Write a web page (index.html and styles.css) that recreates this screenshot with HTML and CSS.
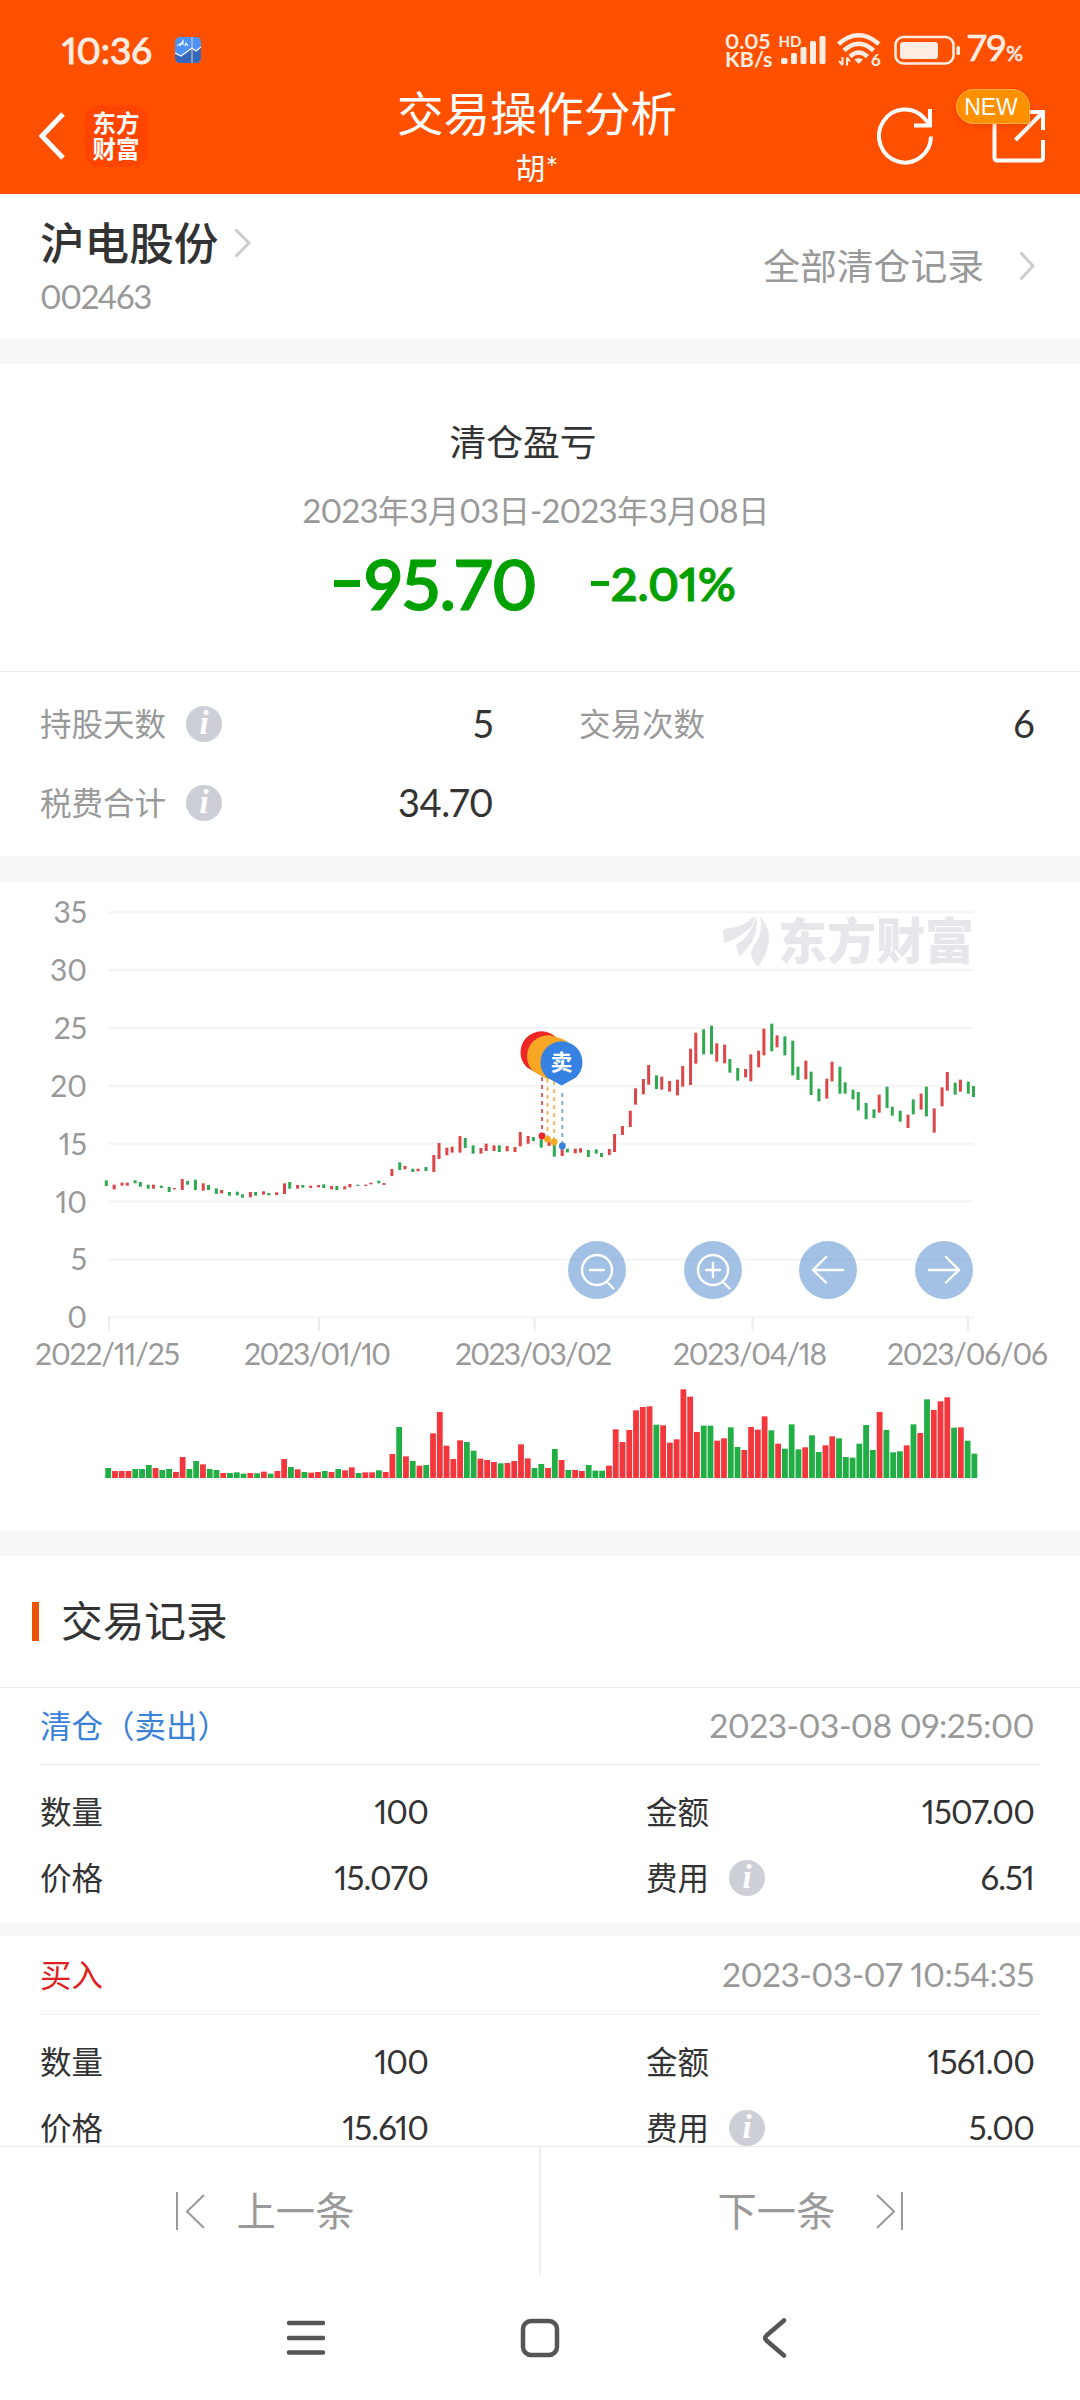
FILE: index.html
```html
<!DOCTYPE html>
<html lang="zh-CN">
<head>
    <meta charset="UTF-8">
    <meta name="viewport" content="width=device-width, initial-scale=1.0">
    <title>交易操作分析</title>
    <link rel="stylesheet" href="styles.css">
</head>
<body>
    <header class="header">
        <div class="status-bar">
            <span class="time">10:36</span>
            <svg class="app-icon" width="26" height="26" viewBox="0 0 26 26">
                <rect width="26" height="26" rx="5" fill="#4a92f8"/>
                <path d="M0 16 L6 19 L17 11 L21 14 L26 10 V21 a5 5 0 0 1 -5 5 H5 a5 5 0 0 1 -5 -5z" fill="#3568bd"/>
                <path d="M0 16 L6 19 L17 11 L21 14 L26 10" fill="none" stroke="#fff" stroke-width="1.3"/>
                <path d="M2 8h3v-2M5 9l3-5v4M10 9l1-3 2 3" fill="none" stroke="#fff" stroke-width="1.1"/>
                <path d="M17 0V26" stroke="#e5d3a0" stroke-width="1"/>
            </svg>
            <div class="net-speed"><span>0.05</span><span>KB/s</span></div>
            <svg class="signal" width="48" height="34" viewBox="778 33 48 34">
                <text x="778.5" y="46.5" class="hd">HD</text>
                <g fill="#ffece2">
                    <rect x="781" y="58" width="6.5" height="6" rx="1.5"/>
                    <rect x="791" y="53" width="6" height="11" rx="1.5"/>
                    <rect x="800.500" y="47" width="6" height="17" rx="1.5"/>
                    <rect x="810" y="41" width="6" height="23" rx="1.5"/>
                    <rect x="819.500" y="36" width="6" height="28" rx="1.5"/>
                </g>
            </svg>
            <svg class="wifi" width="44" height="36" viewBox="837 33 44 36">
                <g fill="none" stroke="#ffece2" stroke-width="4.500">
                    <path d="M838.500 45 Q858.500 27.500 879 45"/>
                    <path d="M844 51.500 Q858.500 38 873.500 51.500"/>
                    <path d="M850 57.500 Q858.500 49.500 867.500 57.500"/>
                </g>
                <path d="M854.500 60.500 Q858.500 57.500 863 60.500 L858.700 65z" fill="#ffece2"/>
                <path d="M842.500 58V66M839 62l3.500 4M847 66.500V58.500M847 58.500l3 4" stroke="#ffece2" stroke-width="2" fill="none"/>
                <text x="871" y="66.500" class="wifi-gen">6</text>
            </svg>
            <svg class="battery" width="67" height="30" viewBox="894 34 67 30">
                <rect x="895.500" y="36" width="58" height="26.500" rx="8" fill="none" stroke="#ffece2" stroke-width="2.600"/>
                <rect x="900" y="41" width="38" height="17" rx="3" fill="#ffece2"/>
                <rect x="956.500" y="45" width="3.500" height="9" rx="1.500" fill="#ffece2"/>
            </svg>
            <span class="percent">79<small>%</small></span>
        </div>
        <div class="title-bar">
            <div class="title-left">
                <svg width="28" height="48" viewBox="0 0 28 48"><path d="M25 2 L4 24 L25 46" fill="none" stroke="#fff" stroke-width="5"/></svg>
                <div class="brand"><span>东方</span><span>财富</span></div>
            </div>
            <div class="title-center">
                <h1>交易操作分析</h1>
                <p>胡*</p>
            </div>
            <div class="title-right">
                <svg width="56" height="58" viewBox="877 107 56 58">
                    <path d="M931 136.500 A26 26.500 0 1 1 924.500 118.500 L930 125" fill="none" stroke="#fff" stroke-width="4"/>
                    <path d="M914 125.500H930V109" fill="none" stroke="#fff" stroke-width="4"/>
                </svg>
                <div class="share">
                    <svg width="54" height="54" viewBox="992 109 54 54">
                        <path d="M994.500 118V158a2.500 2.500 0 0 0 2.500 2.500H1040.500a2.500 2.500 0 0 0 2.500-2.500V140" fill="none" stroke="#fff" stroke-width="4"/>
                        <path d="M1026 112H1043V130M1043 112L1015.500 140" fill="none" stroke="#fff" stroke-width="4"/>
                    </svg>
                    <span class="new-badge">NEW</span>
                </div>
            </div>
        </div>
    </header>

    <section class="stock">
        <div class="stock-info">
            <div class="stock-name">
                <h2>沪电股份</h2>
                <svg width="17" height="30" viewBox="0 0 17 30"><path d="M1.500 1.500 L15 15 L1.500 28.500" fill="none" stroke="#ccc" stroke-width="3"/></svg>
            </div>
            <div class="stock-code">002463</div>
        </div>
        <a class="all-records">
            <span>全部清仓记录</span>
            <svg width="16" height="30" viewBox="0 0 16 30"><path d="M1.500 1.500 L14 15 L1.500 28.500" fill="none" stroke="#ccc" stroke-width="3"/></svg>
        </a>
    </section>

    <section class="summary">
        <h3>清仓盈亏</h3>
        <p class="period"><i>2023</i>年<i>3</i>月<i>03</i>日<i>-2023</i>年<i>3</i>月<i>08</i>日</p>
        <div class="profit">
            <b class="profit-value"><u></u>95.70</b>
            <b class="profit-rate"><u></u>2.01%</b>
        </div>
    </section>

    <section class="stats">
        <div class="stat"><span>持股天数</span><em class="info">i</em><b>5</b></div>
        <div class="stat"><span>交易次数</span><b>6</b></div>
        <div class="stat"><span>税费合计</span><em class="info">i</em><b>34.70</b></div>
    </section>

    <section class="chart">
        <svg id="chart" width="1080" height="648" viewBox="0 882 1080 648">
            <g id="grid"></g>
            <g id="watermark" fill="#e6e6eb">
                <path d="M723 931 Q724 928 731 928 Q746 926 754 916 Q755 920 751 927 Q741 937 724 943z"/>
                <path d="M756 916 Q759 927 752 942 L740 957 Q737 950 736 945 Q751 936 756 916z"/>
                <path d="M760 917 Q769 925 769 939 Q768 953 758 967 Q751 959 751 953 Q751 949 757 941 Q763 930 760 917z"/>
                <text x="778" y="959" class="watermark-text">东方财富</text>
            </g>
            <g id="candles"></g>
            <g id="markers">
                <g fill="none" stroke-width="1.700" stroke-dasharray="4 4">
                    <path d="M542 1077V1134" stroke="#cf4a48"/>
                    <path d="M547.500 1079V1137" stroke="#f0b34c"/>
                    <path d="M554.200 1081V1140" stroke="#f0b34c"/>
                    <path d="M562.300 1093V1144" stroke="#6aa1da"/>
                </g>
                <circle cx="542" cy="1136" r="3.400" fill="#ea2428"/>
                <circle cx="547.500" cy="1139.300" r="3.400" fill="#f6a723"/>
                <circle cx="554.200" cy="1142" r="3.400" fill="#f6a723"/>
                <circle cx="562.300" cy="1146" r="3.400" fill="#3682e2"/>
                <path d="M541.500 1075.500 L527 1067.500 A21 21 0 1 1 556 1067.500z" fill="#ee2624"/>
                <path d="M548 1079.500 L533.500 1071.500 A21 21 0 1 1 562.500 1071.500z" fill="#f8a725"/>
                <path d="M554.500 1081.500 L540 1073.500 A21 21 0 1 1 569 1073.500z" fill="#f8a725"/>
                <path d="M561.500 1085.500 L547 1077.500 A21 21 0 1 1 576 1077.500z" fill="#3682e2"/>
                <text x="561.500" y="1070" class="pin-text">卖</text>
            </g>
            <g id="volumes"></g>
            <g id="controls" fill="none" stroke="#fff" stroke-width="2.400" stroke-linecap="round">
                <circle cx="597" cy="1270" r="29" class="control"/>
                <circle cx="597" cy="1270" r="15"/><path d="M590 1270H604M608 1283L613.500 1288.500"/>
                <circle cx="713" cy="1270" r="29" class="control"/>
                <circle cx="713" cy="1270" r="15"/><path d="M706 1270H720M713 1263V1277M724 1283L729.500 1288.500"/>
                <circle cx="828" cy="1270" r="29" class="control"/>
                <path d="M843 1270H813M826 1257L813 1270L826 1282.500"/>
                <circle cx="944" cy="1270" r="29" class="control"/>
                <path d="M929 1270H959M946 1257L959 1270L946 1282.500"/>
            </g>
        </svg>
    </section>

    <section class="records">
        <h3 class="records-title">交易记录</h3>
        <div class="record first">
            <div class="record-head"><span class="sell">清仓（卖出）</span><time>2023-03-08 09:25:00</time></div>
            <div class="record-body">
                <div class="cell"><span>数量</span><b>100</b></div>
                <div class="cell"><span>金额</span><b>1507.00</b></div>
                <div class="cell"><span>价格</span><b>15.070</b></div>
                <div class="cell"><span>费用</span><em class="info">i</em><b>6.51</b></div>
            </div>
        </div>
        <div class="record">
            <div class="record-head"><span class="buy">买入</span><time>2023-03-07 10:54:35</time></div>
            <div class="record-body">
                <div class="cell"><span>数量</span><b>100</b></div>
                <div class="cell"><span>金额</span><b>1561.00</b></div>
                <div class="cell"><span>价格</span><b>15.610</b></div>
                <div class="cell"><span>费用</span><em class="info">i</em><b>5.00</b></div>
            </div>
        </div>
    </section>

    <footer class="footer">
        <div class="pager">
            <a>
                <svg width="30" height="38" viewBox="0 0 30 38"><path d="M1 0V38M28 3L11 19.500L28 36" fill="none" stroke="#999" stroke-width="2"/></svg>
                <span>上一条</span>
            </a>
            <a>
                <span>下一条</span>
                <svg width="27" height="38" viewBox="0 0 27 38"><path d="M26 0V38M1 3L18 19.500L1 36" fill="none" stroke="#999" stroke-width="2"/></svg>
            </a>
        </div>
        <nav class="system-nav">
            <svg width="38" height="40" viewBox="0 0 38 40"><path d="M2 5H36M2 20H36M2 34.500H36" stroke="#555" stroke-width="4.500" stroke-linecap="round"/></svg>
            <svg width="40" height="40" viewBox="0 0 40 40"><rect x="3" y="3" width="34" height="34" rx="8" fill="none" stroke="#555" stroke-width="4.500"/></svg>
            <svg width="28" height="40" viewBox="0 0 28 40"><path d="M24 2.500 L6.500 17.500 Q4 20 6.500 22.500 L24 37.500" fill="none" stroke="#555" stroke-width="4.500" stroke-linecap="round"/></svg>
        </nav>
    </footer>

    <script>
        // colour, candle top, candle bottom, volume (thirds of a pixel, measured from y = 1000)
        const days = `
            g 541 558 30,r 554 568 21,r 548 557 21,r 548 557 21,g 541 550 27,g 546 560 27,g 554 566 39,r 554 566 30,
            g 557 564 24,g 561 576 27,r 564 568 18,r 537 570 63,g 543 554 27,g 539 570 51,r 550 572 41,g 555 570 27,
            g 565 582 24,r 570 580 15,g 576 587 15,g 575 586 17,g 583 593 13,r 576 592 15,g 576 587 14,r 574 584 19,
            g 579 586 13,r 577 585 21,r 550 582 57,g 546 566 33,r 555 566 26,g 555 563 18,r 557 564 16,r 555 562 18,
            g 553 564 21,r 558 568 18,g 558 570 27,r 559 568 23,r 552 562 32,g 554 558 15,r 554 558 17,r 548 553 17,
            g 542 550 23,r 549 555 18,r 507 528 72,g 487 510 153,r 498 508 65,g 506 516 51,r 506 514 37,g 501 513 39,
            r 465 516 134,r 429 477 198,r 443 466 97,r 440 458 57,r 408 458 113,g 414 444 108,g 436 461 82,r 444 461 58,
            r 431 453 54,r 436 453 48,g 436 456 44,r 438 454 45,r 441 456 51,r 396 439 101,r 408 431 59,g 411 423 30,
            g 418 443 42,r 425 438 30,g 432 470 87,r 445 468 54,g 446 457 24,r 446 460 24,r 445 458 21,g 450 471 39,
            g 448 461 22,g 459 471 22,r 447 465 37,r 402 456 146,r 378 405 108,r 332 381 144,r 265 314 203,r 237 283 213,
            r 195 254 215,g 226 267 160,r 230 269 158,r 243 275 106,r 239 286 116,r 198 260 266,r 146 255 244,r 98 191 138,
            g 88 163 157,g 77 163 157,r 130 185 112,r 134 190 119,g 177 218 152,g 204 242 93,r 207 232 84,r 163 244 153,
            r 152 202 145,r 86 166 185,g 71 154 143,r 106 142 103,g 109 166 88,g 122 226 161,g 200 240 86,r 182 238 92,
            g 215 285 128,g 266 304 78,r 236 296 98,r 185 244 125,g 200 281 119,g 247 281 63,g 269 298 61,g 276 331 103,
            g 309 358 159,g 328 354 84,r 284 338 198,g 260 324 144,g 320 347 77,g 332 365 80,r 344 384 98,g 298 343 161,
            r 281 329 135,g 260 349 236,r 325 398 204,r 262 319 230,r 216 272 242,g 248 284 151,r 239 275 152,g 245 281 112,
            g 258 291 73`.split(',').map(d => d.trim().split(' '));

        const candleColors = { r: '#dc4649', g: '#2fa850' };
        const volumeColors = { r: '#f4373c', g: '#20ae45' };

        let grid = '';
        for (let i = 0; i < 8; i++) {
            const y = 912.300 + i * 57.850;
            grid += `<path d="M108 ${y}H974" stroke="#f4f4f4" stroke-width="2"/>`;
            grid += `<text x="87" y="${y + 11}" class="axis" text-anchor="end">${35 - i * 5}</text>`;
        }
        const dates = [
            ['2022/11/25', 109, 35, 145],
            ['2023/01/10', 319, 244, 147],
            ['2023/03/02', 534.500, 455, 157],
            ['2023/04/18', 752.500, 673, 154],
            ['2023/06/06', 968, 887, 161]
        ];
        dates.forEach(([label, tick, x, width]) => {
            grid += `<path d="M${tick} 1317V1331" stroke="#ebebeb" stroke-width="2"/>`;
            grid += `<text x="${x}" y="1365" class="axis" textLength="${width}">${label}</text>`;
        });
        document.getElementById('grid').innerHTML = grid;

        let candles = '';
        let volumes = '';
        days.forEach(([c, top, bottom, volume], i) => {
            // candles snap to whole dp columns, one dp is 2.62px
            const x = 106.300 + 2.620 * Math.ceil(i * 6.777 / 2.620 - 0.120);
            candles += `<rect x="${x - 1.500}" y="${1000 + top / 3}" width="3" height="${(bottom - top) / 3}" fill="${candleColors[c]}"/>`;
            volumes += `<rect x="${105.300 + i * 6.767}" y="${1478 - volume / 3}" width="5.800" height="${volume / 3}" fill="${volumeColors[c]}"/>`;
        });
        document.getElementById('candles').innerHTML = candles;
        document.getElementById('volumes').innerHTML = volumes;
    </script>
</body>
</html>
```

FILE: styles.css
```css
* {
    box-sizing: border-box;
}

body {
    margin: 0;
    width: 1080px;
    height: 2400px;
    overflow: hidden;
    display: flex;
    flex-direction: column;
    background-color: #f7f7f7;
    color: #333;
    font-family: Lato, "Noto Sans CJK SC", sans-serif;
    font-size: 31.5px;
    font-variant-numeric: proportional-nums;
}

h1, h2, h3, p {
    margin: 0;
    font-weight: normal;
}

b, i {
    font-weight: normal;
    font-style: normal;
}

svg {
    display: block;
    flex-shrink: 0;
}

section {
    background-color: #fff;
    flex-shrink: 0;
}

/* Header */
.header {
    height: 194px;
    flex-shrink: 0;
    background-color: #ff5000;
    color: #fff;
}

.status-bar {
    height: 84px;
    padding: 15px 54px 0 62px;
    display: flex;
    align-items: center;
    color: #ffece2;
}

.time {
    font-size: 37px;
    line-height: 40px;
    width: 113px;
    letter-spacing: -0.1px;
    -webkit-text-stroke: 1px #ffece2;
}

.net-speed {
    margin-left: auto;
    width: 53px;
    display: flex;
    flex-direction: column;
    font-size: 21.5px;
    font-weight: bold;
    line-height: 18px;
}

.hd {
    font-size: 15px;
    font-weight: bold;
    fill: #ffece2;
}

.wifi {
    margin-left: 11px;
}

.wifi-gen {
    font-size: 17px;
    font-weight: bold;
    fill: #ffece2;
}

.battery {
    margin-left: 13px;
}

.percent {
    margin-left: 6px;
    width: 59px;
    font-size: 37px;
    line-height: 40px;
    letter-spacing: -0.3px;
    white-space: nowrap;
    -webkit-text-stroke: 0.6px #ffece2;
}

.percent small {
    font-size: 21px;
}

.title-bar {
    height: 110px;
    padding: 0 34px 0 38px;
    display: flex;
    justify-content: space-between;
}

.title-left, .title-right {
    display: flex;
    align-items: center;
    width: 160px;
    height: 104px;
}

.title-right {
    width: 170px;
    justify-content: flex-end;
    gap: 59px;
}

.brand {
    margin-left: 19px;
    width: 62px;
    height: 62px;
    border-radius: 13px;
    background-color: #ff4500;
    display: flex;
    flex-direction: column;
    align-items: center;
    justify-content: center;
    font-family: "Noto Sans CJK SC", sans-serif;
    font-size: 23.5px;
    font-weight: bold;
    line-height: 26px;
    padding-bottom: 2px;
}

.title-center {
    text-align: center;
}

.title-center h1 {
    font-size: 46.7px;
    line-height: 58px;
}

.title-center p {
    font-size: 30px;
    line-height: 50px;
}

.share {
    position: relative;
}

.new-badge {
    position: absolute;
    left: -36px;
    top: -20px;
    width: 74px;
    height: 35px;
    border: 1px solid #ffb04a;
    border-radius: 18px 18px 0 18px;
    background-color: #ff9000;
    font-family: "Liberation Sans", sans-serif;
    font-size: 23px;
    line-height: 34px;
    text-align: center;
    padding-right: 4px;
    box-shadow: 0 2px 6px rgba(200, 40, 0, 0.35);
}

/* Stock */
.stock {
    height: 144px;
    padding: 0 45px 0 40px;
    display: flex;
    justify-content: space-between;
    align-items: center;
}

.stock-name {
    display: flex;
    align-items: center;
    gap: 16px;
}

.stock-name h2 {
    font-size: 44.6px;
    font-weight: 500;
    line-height: 60px;
}

.stock-code {
    color: #999;
    font-size: 33px;
    letter-spacing: -1.4px;
    line-height: 46px;
}

.all-records {
    display: flex;
    align-items: center;
    gap: 35px;
    font-size: 36.8px;
    color: #999;
}

.all-records span {
    padding-bottom: 4px;
}

/* Summary */
.summary {
    margin-top: 26px;
    height: 307px;
    padding-top: 52px;
    text-align: center;
}

.summary h3 {
    font-size: 36.8px;
    line-height: 52px;
    padding-right: 34px;
}

.period {
    margin-top: 20px;
    padding-right: 8px;
    font-size: 31.5px;
    line-height: 44px;
    color: #999;
}

.period i {
    font-size: 33px;
    letter-spacing: -0.7px;
}

.profit {
    display: flex;
    justify-content: center;
    align-items: center;
    gap: 54px;
    height: 84px;
    margin-top: 8px;
    padding-right: 10px;
    color: #00a000;
}

.profit b {
    display: flex;
    align-items: center;
    font-weight: 600;
    -webkit-text-stroke: 1px #00a000;
}

/* minus sign, a flat bar ahead of the digits */
.profit u {
    height: 7px;
    width: 26px;
    margin-right: 4px;
    background-color: #00a000;
}

.profit-value {
    font-size: 70px;
    letter-spacing: -0.8px;
}

.profit-rate {
    font-size: 47px;
    letter-spacing: -0.2px;
}

.profit .profit-rate u {
    height: 5px;
    width: 18px;
    margin-right: 2px;
}

/* Stats */
.stats {
    height: 185px;
    padding: 11px 46px 0 40px;
    border-top: 1px solid #ededed;
    display: grid;
    grid-template-columns: 453px 455px;
    grid-auto-rows: 79px;
    justify-content: space-between;
}

.stat {
    display: flex;
    align-items: center;
    color: #999;
}

.stat span, .cell span {
    padding-bottom: 2px;
}

.stat b {
    margin-left: auto;
    color: #333;
    font-size: 38px;
    letter-spacing: -0.7px;
}

.info {
    width: 36px;
    height: 36px;
    margin: 2px 0 0 20px;
    border-radius: 50%;
    background-color: #ccd0d6;
    color: #fff;
    font-family: "Liberation Serif", serif;
    font-size: 33px;
    font-style: italic;
    font-weight: bold;
    line-height: 34px;
    text-align: center;
}

/* Chart */
.chart {
    margin-top: 26px;
    height: 648px;
}

.axis {
    font-size: 30px;
    fill: #999;
}

.watermark-text {
    font-family: "Noto Sans CJK SC", sans-serif;
    font-size: 49px;
    font-weight: 900;
}

.pin-text {
    font-family: "Noto Sans CJK SC", sans-serif;
    font-size: 22px;
    font-weight: bold;
    fill: #fff;
    text-anchor: middle;
}

.control {
    fill: rgba(52, 118, 196, 0.45);
    stroke: none;
}

/* Records */
.records {
    margin-top: 26px;
}

.records-title {
    height: 131px;
    padding: 0 0 5px 32px;
    display: flex;
    align-items: center;
    font-size: 41.7px;
}

.records-title::before {
    content: "";
    width: 7px;
    height: 39px;
    margin: 4px 22px 0 0;
    background-color: #ea5504;
}

.record {
    height: 250px;
    border-bottom: 13px solid #f7f7f7;
}

.record-head {
    height: 79px;
    margin: 0 39px;
    padding: 0 7px 4px 1px;
    border-bottom: 1px solid #ededed;
    display: flex;
    align-items: center;
    justify-content: space-between;
}

.first {
    height: 249px;
    border-top: 1px solid #ededed;
}

.first .record-head {
    height: 77px;
}

.record-head time {
    padding-top: 2px;
    color: #999;
    font-size: 33.5px;
    letter-spacing: -0.5px;
}

.sell {
    color: #3a81d7;
}

.buy {
    color: #e02020;
}

.record-body {
    padding: 13px 46px 0 40px;
    display: grid;
    grid-template-columns: 388px 388px;
    justify-content: space-between;
    grid-auto-rows: 66px;
}

.cell {
    display: flex;
    align-items: center;
}

.cell b {
    margin-left: auto;
    font-size: 33px;
    letter-spacing: -0.9px;
}

/* Footer */
.footer {
    position: fixed;
    left: 0;
    bottom: 0;
    width: 1080px;
    height: 254px;
    border-top: 1px solid #ededed;
    background-color: #fff;
}

.pager {
    height: 128px;
    display: flex;
}

.pager a {
    width: 539px;
    display: flex;
    align-items: center;
    justify-content: center;
    gap: 31px;
    padding-right: 9px;
    font-size: 39.3px;
    color: #999;
}

.pager a + a {
    width: 541px;
    border-left: 2px solid #ededed;
    gap: 41px;
    padding: 0;
}

.pager span {
    padding-bottom: 5px;
}

.system-nav {
    height: 125px;
    padding: 0 292px 0 287px;
    display: flex;
    align-items: center;
    justify-content: space-between;
}

.system-nav svg:nth-child(2) {
    margin-left: -5px;
}
```
